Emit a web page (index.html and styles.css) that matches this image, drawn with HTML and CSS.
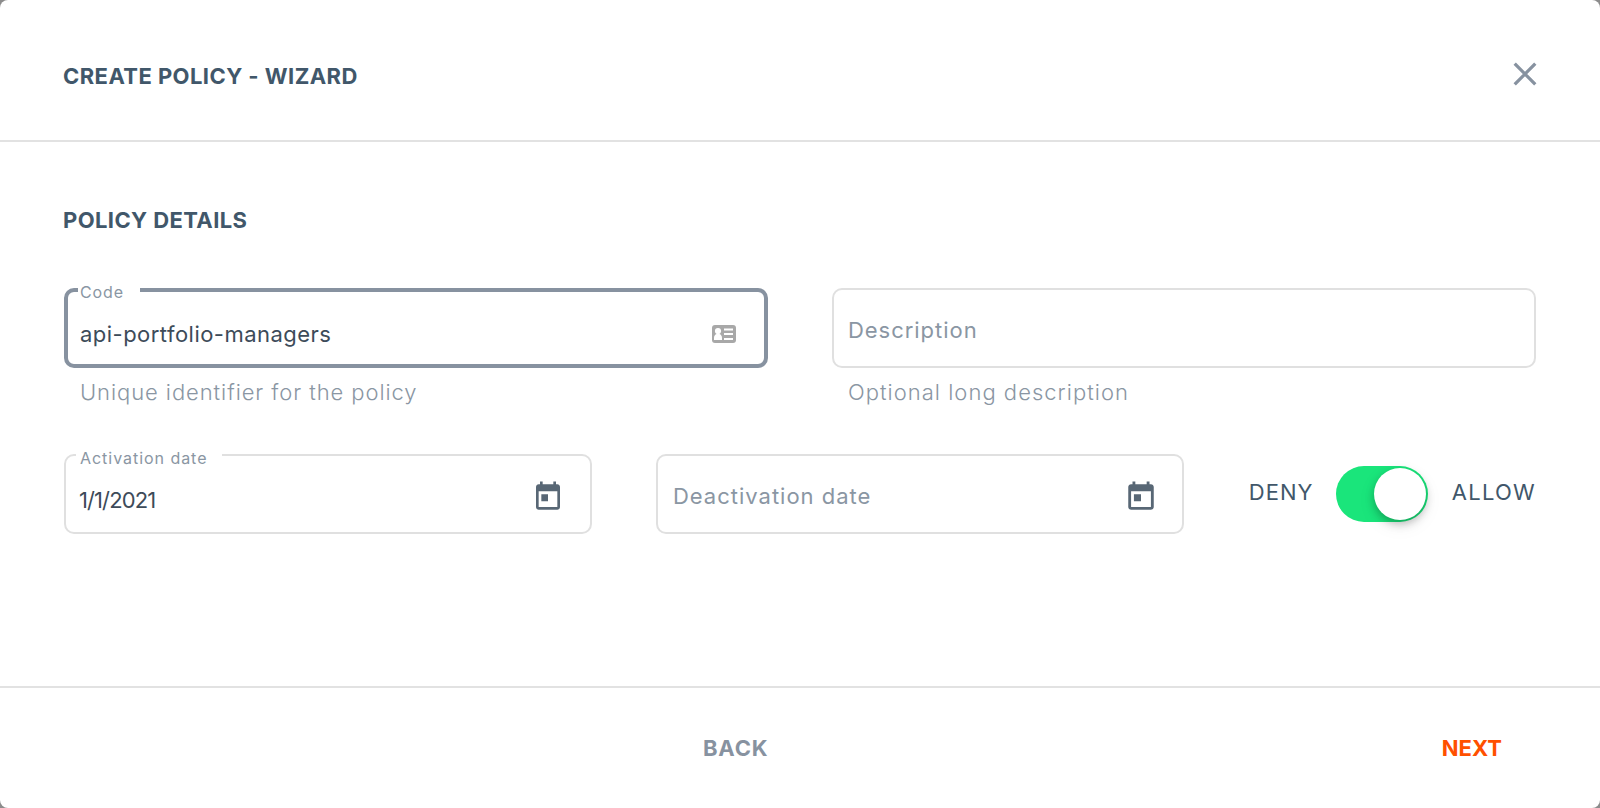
FILE: index.html
```html
<!DOCTYPE html>
<html lang="en">
<head>
<meta charset="utf-8">
<title>Create Policy - Wizard</title>
<link rel="stylesheet" href="styles.css">
</head>
<body>
<main class="dialog">
  <header class="dialog-header">
    <h1 class="heading title">CREATE POLICY - WIZARD</h1>
    <button class="close" aria-label="Close"><svg width="24" height="24" viewBox="0 0 24 24"><path d="M1.700 1.700 22.300 22.300M22.300 1.700 1.700 22.300"/></svg></button>
  </header>
  <section class="dialog-body">
    <h2 class="heading subtitle">POLICY DETAILS</h2>
    <div class="row">
      <div class="column">
        <div class="field focused">
          <span class="notch code-notch">Code</span>
          <span class="value code-value">api-portfolio-managers</span>
          <svg class="card-icon" width="24" height="18" viewBox="0 0 24 18"><rect width="24" height="18" rx="3" fill="#a8a8a8"/><circle cx="6" cy="6" r="3.100" fill="#fff"/><path d="M2 15v-2c0-2 1-3.500 2.500-4h3c1.500.5 2.500 2 2.500 4v2zM12 3.500h9v2h-9zM12 8h9v2h-9zM12 13h9v2h-9z" fill="#fff"/></svg>
        </div>
        <p class="hint">Unique identifier for the policy</p>
      </div>
      <div class="column">
        <div class="field"><span class="placeholder">Description</span></div>
        <p class="hint wide">Optional long description</p>
      </div>
    </div>
    <div class="row dates">
      <div class="field date">
        <span class="notch date-notch">Activation date</span>
        <span class="value date-value">1/1/2021</span>
        <svg class="calendar narrow" viewBox="0 0 24 24" preserveAspectRatio="none"><path d="M19 3h-1V1h-2v2H8V1H6v2H5c-1.110 0-1.990.9-1.990 2L3 19c0 1.100.89 2 2 2h14c1.100 0 2-.9 2-2V5c0-1.100-.9-2-2-2zm0 16H5V8h14v11zM7 10h5v5H7z"/></svg>
      </div>
      <div class="field date deactivation">
        <span class="placeholder">Deactivation date</span>
        <svg class="calendar" viewBox="0 0 24 24"><path d="M19 3h-1V1h-2v2H8V1H6v2H5c-1.110 0-1.990.9-1.990 2L3 19c0 1.100.89 2 2 2h14c1.100 0 2-.9 2-2V5c0-1.100-.9-2-2-2zm0 16H5V8h14v11zM7 10h5v5H7z"/></svg>
      </div>
      <div class="decision">
        <span class="deny">DENY</span>
        <span class="toggle"><span class="knob"></span></span>
        <span class="allow">ALLOW</span>
      </div>
    </div>
  </section>
  <footer class="dialog-footer">
    <button class="action back">BACK</button>
    <button class="action next">NEXT</button>
  </footer>
</main>
</body>
</html>
```
FILE: styles.css
```css
* { box-sizing: border-box; }
body { margin: 0; background: #8c8c8c; font-family: Inter, sans-serif; font-size: 22px; line-height: 28px; }
button { border: 0; padding: 0; background: none; font: inherit; }
.dialog { display: flex; flex-direction: column; width: 1600px; height: 808px; background: #fff; border-radius: 8px; overflow: hidden; }
.dialog-header { display: flex; align-items: center; justify-content: space-between; height: 142px; padding: 12px 63px 0; border-bottom: 2px solid #e2e2e2; }
.heading { margin: 0; font-size: 22px; font-weight: 700; color: #41576a; }
.title { letter-spacing: .44px; }
.close { display: flex; margin-top: -5px; }
.close path { stroke: #8792a0; stroke-width: 3.300; fill: none; }
.dialog-body { flex: 1; padding: 64px 64px 0; }
.subtitle { margin: 0 0 54px -1px; letter-spacing: .4px; }
.row { display: flex; gap: 64px; }
.column { width: 704px; }
.field { position: relative; display: flex; align-items: center; justify-content: space-between; height: 80px; padding: 0 24px 0 14px; border: 2px solid #e0e0e0; border-radius: 10px; color: #8a96a3; }
.focused { border: 4px solid #8792a0; padding: 0 28px 0 12px; }
.value { color: #3d4b59; padding-top: 12px; }
.code-value { letter-spacing: .47px; }
.date-value { margin-left: -1px; letter-spacing: -.9px; }
.placeholder { padding-top: 4px; letter-spacing: .96px; }
.notch { position: absolute; height: 6px; background: #fff; font-size: 16px; line-height: 8px; }
.code-notch { left: 10px; top: -4px; width: 62px; padding-left: 2px; letter-spacing: .9px; }
.date-notch { left: 10px; top: -2px; width: 146px; padding-left: 4px; letter-spacing: .960px; }
.card-icon { margin-top: 12px; }
.hint { margin: 10px 0 0; padding-left: 16px; font-weight: 300; color: #8a96a3; letter-spacing: .92px; }
.wide { letter-spacing: 1.020px; }
.dates { margin-top: 48px; }
.date { width: 528px; }
.date.field { padding-right: 26px; }
.deactivation.field { padding: 0 24px 0 15px; }
.deactivation .placeholder { letter-spacing: 1px; }
.calendar { width: 34px; height: 34px; margin-top: 6px; fill: #586775; }
.narrow { width: 32px; }
.decision { flex: 1; display: flex; align-items: center; color: #41576a; }
.deny, .allow { padding-bottom: 5px; }
.deny { width: 86px; padding-left: 1px; letter-spacing: 1px; }
.allow { margin-left: 24px; letter-spacing: 1.250px; white-space: nowrap; }
.toggle { flex: none; width: 92px; height: 56px; margin-left: 2px; padding: 2px; border-radius: 28px; background: #1ae57b; display: flex; justify-content: flex-end; }
.knob { width: 52px; height: 52px; border-radius: 50%; background: #fff; box-shadow: 0 4px 8px rgba(0,0,0,.25), 0 6px 20px rgba(0,0,0,.06); }
.dialog-footer { height: 122px; border-top: 2px solid #e2e2e2; display: flex; align-items: center; justify-content: space-between; }
.action { font-weight: 700; }
.back { color: #8792a0; margin-left: 703px; letter-spacing: .8px; }
.next { color: #ff5000; margin-right: 98px; }
```
